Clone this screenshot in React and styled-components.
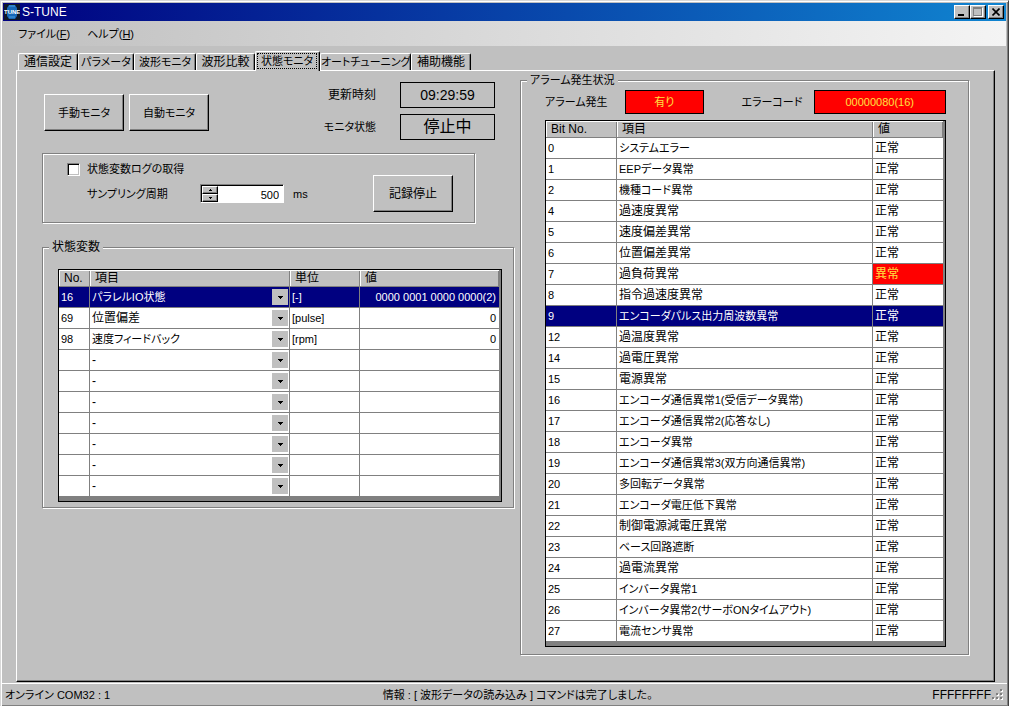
import React, { useState } from "react";
import styled, { createGlobalStyle, css } from "styled-components";

const GlobalStyle = createGlobalStyle`
  * {
    box-sizing: border-box;
  }

  body {
    margin: 0;
    background: #c0c0c0;
  }

  body, button, input, select {
    font-family: "Liberation Sans", "Noto Sans CJK JP", sans-serif;
    font-size: 12px;
    line-height: 16px;
    font-feature-settings: "palt";
    color: #000;
  }
`;

// labels with kana are set one size smaller than kanji-only ones
const textSize = (text) => (/[ぁ-んァ-ヶ]/.test(text) ? 11 : 12);

const raised = css`
  border: 1px solid;
  border-color: #fff #000 #000 #fff;
  box-shadow: inset -1px -1px 0 #808080;
  background: #c0c0c0;
`;

const Window = styled.div`
  display: flex;
  flex-direction: column;
  min-height: 100vh;
  padding: 1px;
  border: 1px solid;
  border-color: #d8d8d8 #404040 #606060 #d8d8d8;
  box-shadow: inset 1px 1px 0 #fff, inset -1px -1px 0 #808080;
  background: #c0c0c0;
`;

const TitleBar = styled.header`
  display: flex;
  align-items: center;
  height: 18px;
  margin: 1px 1px 0;
  padding: 0 2px 0 1px;
  background: linear-gradient(to right, #000080, #1084d0);
  color: #fff;
`;

const Title = styled.h1`
  flex: 1;
  margin: 0 0 0 2px;
  font-size: 12px;
  font-weight: normal;
`;

const WindowButton = styled.button`
  ${raised}
  display: flex;
  align-items: center;
  justify-content: center;
  width: 16px;
  height: 14px;
  margin-left: ${(props) => (props.$gap ? "2px" : "0")};
  padding: 0;
`;

const MenuBar = styled.nav`
  display: flex;
  gap: 17px;
  height: 25px;
  margin: 0 1px;
  padding: 4px 15px;
  background: linear-gradient(to right, #c0c0c0, #f4f4f4);
`;

const MenuItem = styled.button`
  padding: 0;
  border: none;
  background: none;
  font-size: 11px;
`;

const Tabs = styled.div`
  display: flex;
  align-items: flex-end;
  height: 24px;
  padding-left: 16px;
`;

const Tab = styled.button`
  width: ${(props) => props.$width}px;
  height: 17px;
  padding: 0;
  border: 1px solid;
  border-color: #fff #000 transparent #fff;
  border-bottom: none;
  border-radius: 2px 2px 0 0;
  box-shadow: inset -1px 0 0 #808080;
  background: #c0c0c0;
  font-size: ${(props) => props.$size}px;
  white-space: nowrap;

  ${(props) =>
    props.$active &&
    css`
      z-index: 1;
      height: 20px;
      margin-bottom: -1px;
      padding: 0 2px 1px 1px;
    `}
`;

const TabFocus = styled.span`
  display: block;
  height: 16px;
  outline: ${(props) => (props.$active ? "1px dotted #000" : "none")};
  outline-offset: -1px;
  line-height: 16px;
`;

const Page = styled.main`
  flex: 1;
  display: grid;
  grid-template-columns: 472fr 449fr;
  gap: 6px;
  align-items: start;
  margin: 0 12px 0 14px;
  padding: 1px 25px 26px 25px;
  border: 1px solid;
  border-color: #fff #000 #000 #fff;
  box-shadow: inset -1px -1px 0 #808080;
`;

const TopRow = styled.div`
  display: flex;
  justify-content: space-between;
  padding: 10px 19px 13px 2px;
`;

const Buttons = styled.div`
  display: flex;
  gap: 5px;
  padding-top: 12px;
`;

const PushButton = styled.button`
  ${raised}
  width: 80px;
  height: 37px;
  padding: 0;
  font-size: ${(props) => props.$size}px;
`;

const Monitor = styled.dl`
  display: grid;
  grid-template-columns: auto 95px;
  gap: 6px 24px;
  align-items: center;
  justify-items: end;
  margin: 0;
`;

const MonitorLabel = styled.dt`
  font-size: ${(props) => props.$size}px;
  line-height: 22px;
`;

const MonitorValue = styled.dd`
  width: 100%;
  height: 26px;
  margin: 0;
  border: 1px solid #000;
  text-align: center;
  font-size: ${(props) => (props.$large ? 16 : 14)}px;
  line-height: 24px;
`;

const Group = styled.fieldset`
  min-width: 0;
  margin: 0;
  padding: 0;
  border: 1px solid #808080;
  box-shadow: inset 1px 1px 0 #fff, 1px 1px 0 #fff;
`;

const Legend = styled.legend`
  margin-left: 6px;
  padding: 0 3px;
  background: #c0c0c0;
  font-size: ${(props) => props.$size}px;
`;

const LogGroup = styled(Group)`
  display: flex;
  align-items: flex-end;
  justify-content: space-between;
  height: 70px;
  margin-right: 39px;
  padding: 7px 21px 10px 24px;
`;

const LogSettings = styled.div`
  display: flex;
  flex-direction: column;
  align-self: flex-start;
  gap: 7px;
  font-size: 11px;
`;

const CheckRow = styled.label`
  display: flex;
  align-items: center;
  gap: 7px;
`;

const Checkbox = styled.input`
  appearance: none;
  width: 13px;
  height: 13px;
  margin: 0;
  border: 1px solid;
  border-color: #808080 #fff #fff #808080;
  box-shadow: inset 1px 1px 0 #000, inset -1px -1px 0 #c0c0c0;
  background: #fff;

  &:checked {
    background: radial-gradient(#000 3px, #fff 4px);
  }
`;

const PeriodRow = styled.div`
  display: flex;
  align-items: center;
  padding-left: 20px;
`;

const PeriodLabel = styled.label`
  width: 113px;
`;

const Spinner = styled.div`
  display: flex;
  width: 84px;
  height: 19px;
  margin-right: 9px;
  border: 1px solid;
  border-color: #808080 #fff #fff #808080;
  box-shadow: inset 1px 1px 0 #000;
  background: #fff;
  padding: 1px 0 0 1px;
`;

const SpinButtons = styled.div`
  display: flex;
  flex-direction: column;
  width: 16px;
`;

const SpinButton = styled.button`
  ${raised}
  display: flex;
  align-items: center;
  justify-content: center;
  height: 8px;
  padding: 0;
`;

const SpinInput = styled.input`
  flex: 1;
  width: 0;
  padding: 1px 4px 0 0;
  border: none;
  outline: none;
  background: transparent;
  text-align: right;
  font-size: 11px;
`;

const VariablesGroup = styled(Group)`
  margin-top: 16px;
`;

const VariablesBody = styled.div`
  padding: 14px 11px 5px 15px;
`;

const AlarmBody = styled.div`
  padding: 2px 22px 7px 24px;
`;

const AlarmRow = styled.dl`
  display: flex;
  align-items: center;
  margin: 0 0 6px;
`;

const AlarmLabel = styled.dt`
  flex: none;
  width: ${(props) => props.$width}px;
  font-size: 11px;
`;

const AlarmValue = styled.dd`
  flex: ${(props) => props.$grow};
  height: 24px;
  margin: 0 ${(props) => (props.$spaced ? 38 : 0)}px 0 0;
  border: 1px solid #000;
  background: #f00;
  color: #ffe040;
  text-align: center;
  font-size: 11px;
  line-height: 22px;
`;

const GridFrame = styled.div`
  padding: 0 2px 4px 0;
  border: 1px solid #000;
  background: #808080;
`;

const Grid = styled.table`
  width: 100%;
  border-collapse: separate;
  border-spacing: 0;
  table-layout: fixed;
  background: #fff;
`;

const HeadCell = styled.th`
  width: ${(props) => (props.$width ? `${props.$width}px` : "auto")};
  height: 17px;
  padding: 0 5px;
  border-bottom: 1px solid #808080;
  box-shadow: inset 1px 1px 0 #fff, inset -1px 0 0 #808080;
  background: #c0c0c0;
  text-align: left;
  font-weight: normal;
  line-height: 16px;
`;

const Row = styled.tr`
  background: ${(props) => (props.$selected ? "#000080" : "#fff")};
  color: ${(props) => (props.$selected ? "#fff" : "#000")};
`;

const Cell = styled.td`
  height: 21px;
  padding: 0 3px 0 2px;
  border-right: 1px solid #808080;
  border-bottom: 1px solid #808080;
  overflow: hidden;
  white-space: nowrap;
  line-height: 20px;
  text-align: ${(props) => (props.$right ? "right" : "left")};
  font-size: ${(props) => props.$size || 12}px;

  ${(props) =>
    props.$error &&
    css`
      background: #f00;
      color: #ffe040;
    `}

  &:last-child {
    border-right: none;
  }
`;

const Picker = styled.div`
  position: relative;
  display: flex;
  align-items: center;
  height: 20px;
`;

const Select = styled.select`
  appearance: none;
  width: 100%;
  height: 20px;
  padding: 0 20px 0 0;
  border: none;
  outline: none;
  background: transparent;
  color: inherit;
  font-size: ${(props) => props.$size}px;
`;

const Arrow = styled.span`
  position: absolute;
  right: -2px;
  display: flex;
  align-items: center;
  justify-content: center;
  width: 16px;
  height: 16px;
  background: #c0c0c0;
  pointer-events: none;
`;

const StatusBar = styled.footer`
  display: grid;
  grid-template-columns: 378fr 550fr auto auto;
  align-items: center;
  height: 22px;
  margin-top: 1px;
  padding: 0 3px;
  border-top: 1px solid #fff;
`;

const StatusText = styled.span`
  font-size: ${(props) => props.$size}px;
`;

const variables = [
  { no: "16", name: "パラレルIO状態", unit: "[-]", value: "0000 0001 0000 0000(2)" },
  { no: "69", name: "位置偏差", unit: "[pulse]", value: "0" },
  { no: "98", name: "速度フィードバック", unit: "[rpm]", value: "0" },
  ...Array.from({ length: 7 }, () => ({ no: "", name: "-", unit: "", value: "" })),
];

const alarms = [
  [0, "システムエラー"],
  [1, "EEPデータ異常"],
  [2, "機種コード異常"],
  [4, "過速度異常"],
  [5, "速度偏差異常"],
  [6, "位置偏差異常"],
  [7, "過負荷異常", true],
  [8, "指令過速度異常"],
  [9, "エンコーダパルス出力周波数異常"],
  [12, "過温度異常"],
  [14, "過電圧異常"],
  [15, "電源異常"],
  [16, "エンコーダ通信異常1(受信データ異常)"],
  [17, "エンコーダ通信異常2(応答なし)"],
  [18, "エンコーダ異常"],
  [19, "エンコーダ通信異常3(双方向通信異常)"],
  [20, "多回転データ異常"],
  [21, "エンコーダ電圧低下異常"],
  [22, "制御電源減電圧異常"],
  [23, "ベース回路遮断"],
  [24, "過電流異常"],
  [25, "インバータ異常1"],
  [26, "インバータ異常2(サーボONタイムアウト)"],
  [27, "電流センサ異常"],
];

const tabs = [
  ["通信設定", 60],
  ["パラメータ", 56],
  ["波形モニタ", 62],
  ["波形比較", 59],
  ["状態モニタ", 65],
  ["オートチューニング", 91],
  ["補助機能", 60],
];

const AppIcon = () => (
  <svg width="16" height="16" viewBox="0 0 16 16" aria-hidden="true">
    <rect width="16" height="16" fill="#101828" />
    <path d="M5 1h6l2 3v8l-2 3H5l-2-3V4z" fill="#1668b8" />
    <path d="M5 2h6M5 13h6" stroke="#4aa0e0" />
    <text x="0" y="10" fontSize="6" fontWeight="bold" fill="#fff">
      TUNE
    </text>
  </svg>
);

const DownArrow = () => (
  <svg width="5" height="3" viewBox="0 0 5 3" shapeRendering="crispEdges">
    <path d="M0 0h5v1h-1v1h-1v1h-1v-1h-1v-1h-1z" />
  </svg>
);

const SizeGrip = () => (
  <svg width="13" height="13" viewBox="0 0 13 13" shapeRendering="crispEdges">
    {[[9, 1], [5, 5], [9, 5], [1, 9], [5, 9], [9, 9]].map(([x, y]) => (
      <g key={`${x}-${y}`}>
        <rect x={x + 1} y={y + 1} width="2" height="2" fill="#fff" />
        <rect x={x} y={y} width="2" height="2" fill="#808080" />
      </g>
    ))}
  </svg>
);

const VariableTable = () => {
  const [selected, setSelected] = useState(0);

  return (
    <GridFrame>
      <Grid>
        <thead>
          <tr>
            <HeadCell $width={31}>No.</HeadCell>
            <HeadCell>項目</HeadCell>
            <HeadCell $width={70}>単位</HeadCell>
            <HeadCell $width={139}>値</HeadCell>
          </tr>
        </thead>
        <tbody>
          {variables.map((item, i) => (
            <Row key={i} $selected={i === selected} onClick={() => setSelected(i)}>
              <Cell $size={11}>{item.no}</Cell>
              <Cell>
                <Picker>
                  <Select
                    aria-label={`項目 ${i + 1}`}
                    defaultValue={item.name}
                    $size={textSize(item.name)}
                  >
                    <option>{item.name}</option>
                  </Select>
                  <Arrow>
                    <DownArrow />
                  </Arrow>
                </Picker>
              </Cell>
              <Cell $size={11}>{item.unit}</Cell>
              <Cell $size={11} $right>
                {item.value}
              </Cell>
            </Row>
          ))}
        </tbody>
      </Grid>
    </GridFrame>
  );
};

const AlarmTable = () => {
  const [selected, setSelected] = useState(9);

  return (
    <GridFrame>
      <Grid>
        <thead>
          <tr>
            <HeadCell $width={71}>Bit No.</HeadCell>
            <HeadCell>項目</HeadCell>
            <HeadCell $width={70}>値</HeadCell>
          </tr>
        </thead>
        <tbody>
          {alarms.map(([bit, name, error]) => (
            <Row key={bit} $selected={bit === selected} onClick={() => setSelected(bit)}>
              <Cell $size={11}>{bit}</Cell>
              <Cell $size={textSize(name)}>{name}</Cell>
              <Cell $error={error}>{error ? "異常" : "正常"}</Cell>
            </Row>
          ))}
        </tbody>
      </Grid>
    </GridFrame>
  );
};

const App = () => {
  const [activeTab, setActiveTab] = useState("状態モニタ");
  const [logging, setLogging] = useState(false);
  const [period, setPeriod] = useState(500);

  return (
    <>
      <GlobalStyle />
      <Window>
        <TitleBar>
          <AppIcon />
          <Title>S-TUNE</Title>
          <WindowButton aria-label="最小化">
            <svg width="8" height="8" viewBox="0 0 8 8">
              <path d="M0 6h6v2H0z" />
            </svg>
          </WindowButton>
          <WindowButton aria-label="最大化">
            <svg width="10" height="10" viewBox="0 0 10 10" shapeRendering="crispEdges">
              <path d="M1 1h9v9H1z" fill="#fff" />
              <path d="M0 0h9v9H0z" fill="#808080" />
              <path d="M1 2h7v6H1z" fill="#c0c0c0" />
            </svg>
          </WindowButton>
          <WindowButton $gap aria-label="閉じる">
            <svg width="8" height="8" viewBox="0 0 8 8">
              <path d="M0.5 0.5l7 7M7.5 0.5l-7 7" stroke="#000" strokeWidth="1.6" />
            </svg>
          </WindowButton>
        </TitleBar>
        <MenuBar>
          <MenuItem>
            ファイル(<u>F</u>)
          </MenuItem>
          <MenuItem>
            ヘルプ(<u>H</u>)
          </MenuItem>
        </MenuBar>
        <Tabs role="tablist">
          {tabs.map(([name, width]) => (
            <Tab
              key={name}
              role="tab"
              aria-selected={name === activeTab}
              $active={name === activeTab}
              $width={width}
              $size={textSize(name)}
              onClick={() => setActiveTab(name)}
            >
              <TabFocus $active={name === activeTab}>{name}</TabFocus>
            </Tab>
          ))}
        </Tabs>
        <Page>
          <div>
            <TopRow>
              <Buttons>
                <PushButton $size={11}>手動モニタ</PushButton>
                <PushButton $size={11}>自動モニタ</PushButton>
              </Buttons>
              <Monitor>
                <MonitorLabel $size={12}>更新時刻</MonitorLabel>
                <MonitorValue>09:29:59</MonitorValue>
                <MonitorLabel $size={11}>モニタ状態</MonitorLabel>
                <MonitorValue $large>停止中</MonitorValue>
              </Monitor>
            </TopRow>
            <LogGroup>
              <LogSettings>
                <CheckRow>
                  <Checkbox
                    type="checkbox"
                    checked={logging}
                    onChange={(e) => setLogging(e.target.checked)}
                  />
                  状態変数ログの取得
                </CheckRow>
                <PeriodRow>
                  <PeriodLabel htmlFor="period">サンプリング周期</PeriodLabel>
                  <Spinner>
                    <SpinButtons>
                      <SpinButton aria-label="増やす" onClick={() => setPeriod(period + 1)}>
                        <svg width="3" height="2" viewBox="0 0 3 2">
                          <path d="M1 0h1v1h1v1H0V1h1z" />
                        </svg>
                      </SpinButton>
                      <SpinButton aria-label="減らす" onClick={() => setPeriod(period - 1)}>
                        <svg width="3" height="2" viewBox="0 0 3 2">
                          <path d="M0 0h3v1H2v1H1V1H0z" />
                        </svg>
                      </SpinButton>
                    </SpinButtons>
                    <SpinInput
                      id="period"
                      type="text"
                      value={period}
                      onChange={(e) => setPeriod(Number(e.target.value) || 0)}
                    />
                  </Spinner>
                  ms
                </PeriodRow>
              </LogSettings>
              <PushButton $size={12}>記録停止</PushButton>
            </LogGroup>
            <VariablesGroup>
              <Legend $size={12}>状態変数</Legend>
              <VariablesBody>
                <VariableTable />
              </VariablesBody>
            </VariablesGroup>
          </div>
          <Group>
            <Legend $size={11}>アラーム発生状況</Legend>
            <AlarmBody>
              <AlarmRow>
                <AlarmLabel $width={80}>アラーム発生</AlarmLabel>
                <AlarmValue $grow={78} $spaced>
                  有り
                </AlarmValue>
                <AlarmLabel $width={72}>エラーコード</AlarmLabel>
                <AlarmValue $grow={133}>00000080(16)</AlarmValue>
              </AlarmRow>
              <AlarmTable />
            </AlarmBody>
          </Group>
        </Page>
        <StatusBar>
          <StatusText $size={11}>オンライン COM32 : 1</StatusText>
          <StatusText $size={11}>
            情報 : [ 波形データの読み込み ] コマンドは完了しました。
          </StatusText>
          <StatusText $size={12}>FFFFFFFF</StatusText>
          <SizeGrip />
        </StatusBar>
      </Window>
    </>
  );
};

export default App;
